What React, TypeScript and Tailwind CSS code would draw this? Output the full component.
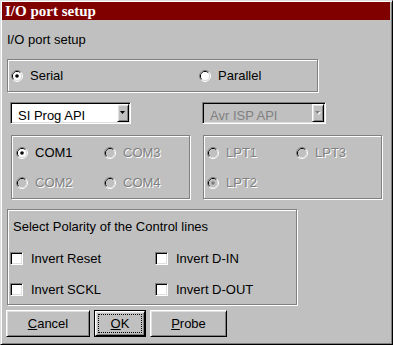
import React from "react"

// Win95-style bevels
const RAISED = "border border-t-white border-l-white border-r-black border-b-black shadow-[inset_1px_1px_0_#dfdfdf,inset_-1px_-1px_0_#808080]"
const SUNKEN = "border border-t-[#808080] border-l-[#808080] border-r-white border-b-white shadow-[inset_1px_1px_0_#000,inset_-1px_-1px_0_#dfdfdf]"
const ETCHED = "border border-[#808080] shadow-[inset_1px_1px_0_#fff,1px_1px_0_#fff]"
const DISABLED_TEXT = "text-[#808080] [text-shadow:1px_1px_0_#fff]"

function Radio({ checked = false, disabled = false }: { checked?: boolean; disabled?: boolean }) {
  return (
    <svg width="12" height="12" viewBox="0 0 12 12" className="shrink-0">
      <path d="M2.11 9.89A5.5 5.5 0 0 1 9.89 2.11" stroke="#808080" fill="none" />
      <path d="M9.89 2.11A5.5 5.5 0 0 1 2.11 9.89" stroke="#fff" fill="none" />
      <path d="M2.82 9.18A4.5 4.5 0 0 1 9.18 2.82" stroke="#000" fill="none" />
      <path d="M9.18 2.82A4.5 4.5 0 0 1 2.82 9.18" stroke="#dfdfdf" fill="none" />
      <circle cx="6" cy="6" r="4" fill={disabled ? "#c0c0c0" : "#fff"} />
      {checked && <circle cx="6" cy="6" r="1.8" fill={disabled ? "#808080" : "#000"} />}
    </svg>
  )
}

function RadioItem({ label, checked, disabled, width }: { label: string; checked?: boolean; disabled?: boolean; width?: string }) {
  return (
    <div className={`flex items-center gap-[7px] ${width ?? ""}`}>
      <Radio checked={checked} disabled={disabled} />
      <span className={disabled ? DISABLED_TEXT : ""}>{label}</span>
    </div>
  )
}

function Check({ label, width }: { label: string; width?: string }) {
  return (
    <div className={`flex items-center gap-[8px] ${width ?? ""}`}>
      <div className={`w-[13px] h-[13px] bg-white shrink-0 ${SUNKEN}`} />
      <span>{label}</span>
    </div>
  )
}

function Arrow({ disabled = false }: { disabled?: boolean }) {
  return (
    <svg width="6" height="4" viewBox="0 0 6 4">
      {disabled && <polygon points="1,1 6,1 3.5,4" fill="#fff" />}
      <polygon points="0,0 5,0 2.5,3" fill={disabled ? "#808080" : "#000"} />
    </svg>
  )
}

function Combo({ text, width, disabled = false }: { text: string; width: string; disabled?: boolean }) {
  return (
    <div className={`${width} h-[22px] p-px flex ${SUNKEN} ${disabled ? "bg-[#c0c0c0]" : "bg-white"}`}>
      <div className={`flex-1 pl-[6px] pt-[4px] ${disabled ? "text-[#808080]" : ""}`}>{text}</div>
      <div className={`w-[12px] h-full bg-[#c0c0c0] flex items-center justify-center ${RAISED}`}>
        <Arrow disabled={disabled} />
      </div>
    </div>
  )
}

export default function App() {
  return (
    <div className="w-[393px] h-[345px] bg-[#c0c0c0] border border-t-[#dfdfdf] border-l-[#dfdfdf] border-r-black border-b-black font-['Liberation_Sans',Arial,sans-serif] text-[13px] leading-[15px] text-black">
      <div className="h-full p-px shadow-[inset_1px_1px_0_#fff,inset_-1px_-1px_0_#808080]">
        {/* Title bar */}
        <div className="h-[18px] mr-px bg-[#800000] pl-[3px] text-white font-bold font-['Liberation_Serif','Times_New_Roman',serif] text-[15px] leading-[18px]">
          I/O port setup
        </div>

        <div className="ml-[5px] mt-[12px]">I/O port setup</div>

        {/* Serial / Parallel */}
        <div className={`ml-[5px] mt-[12px] w-[311px] h-[33px] flex items-center pl-[3px] ${ETCHED}`}>
          <RadioItem label="Serial" checked width="w-[188px]" />
          <RadioItem label="Parallel" />
        </div>

        {/* API combos */}
        <div className="mt-[10px] ml-[8px] flex">
          <Combo text="SI Prog API" width="w-[121px]" />
          <div className="ml-[71px]">
            <Combo text="Avr ISP API" width="w-[124px]" disabled />
          </div>
        </div>

        {/* COM / LPT ports */}
        <div className="mt-[11px] ml-[9px] flex">
          <div className={`w-[179px] h-[64px] pt-[9px] pl-[4px] ${ETCHED}`}>
            <div className="flex">
              <RadioItem label="COM1" checked width="w-[88px]" />
              <RadioItem label="COM3" disabled />
            </div>
            <div className="flex mt-[15px]">
              <RadioItem label="COM2" disabled width="w-[88px]" />
              <RadioItem label="COM4" disabled />
            </div>
          </div>
          <div className={`ml-[13px] w-[179px] h-[64px] pt-[9px] pl-[3px] ${ETCHED}`}>
            <div className="flex">
              <RadioItem label="LPT1" disabled width="w-[89px]" />
              <RadioItem label="LPT3" disabled />
            </div>
            <div className="flex mt-[15px]">
              <RadioItem label="LPT2" checked disabled />
            </div>
          </div>
        </div>

        {/* Polarity */}
        <div className={`mt-[10px] ml-[5px] w-[290px] h-[96px] pt-[9px] pl-[2px] ${ETCHED}`}>
          <div className="ml-[3px]">Select Polarity of the Control lines</div>
          <div className="flex mt-[17px]">
            <Check label="Invert Reset" width="w-[145px]" />
            <Check label="Invert D-IN" />
          </div>
          <div className="flex mt-[16px]">
            <Check label="Invert SCKL" width="w-[145px]" />
            <Check label="Invert D-OUT" />
          </div>
        </div>

        {/* Buttons */}
        <div className="mt-[5px] ml-[4px] flex gap-[4px]">
          <button className={`w-[84px] h-[27px] flex items-center justify-center ${RAISED}`}>
            <span><u>C</u>ancel</span>
          </button>
          <button className="w-[52px] h-[27px] border border-black">
            <div className={`h-full p-[2px] ${RAISED}`}>
              <div className="h-full border border-dotted border-black flex items-center justify-center">
                <span><u>O</u>K</span>
              </div>
            </div>
          </button>
          <button className={`w-[77px] h-[27px] flex items-center justify-center ${RAISED}`}>
            <span><u>P</u>robe</span>
          </button>
        </div>
      </div>
    </div>
  )
}
